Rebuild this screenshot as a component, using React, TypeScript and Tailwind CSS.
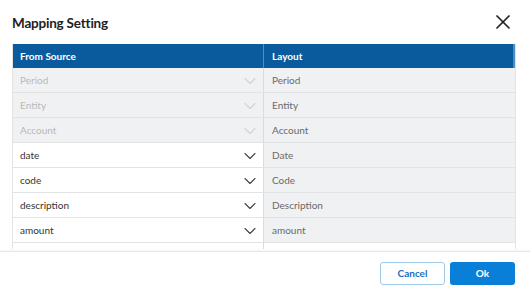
import { ChevronDown, X } from "lucide-react";

const ROWS = [
  { source: "Period", target: "Period", locked: true },
  { source: "Entity", target: "Entity", locked: true },
  { source: "Account", target: "Account", locked: true },
  { source: "date", target: "Date", locked: false },
  { source: "code", target: "Code", locked: false },
  { source: "description", target: "Description", locked: false },
  { source: "amount", target: "amount", locked: false },
];

export default function App() {
  return (
    <div className="h-[300px] w-[530px] bg-white font-['Lato','Liberation_Sans',sans-serif] text-[10px]">
      <div className="flex h-[44px] items-center justify-between pl-3 pr-[15px]">
        <h1 className="pt-[2px] text-[13.5px] font-bold tracking-[-0.2px] text-[#222]">Mapping Setting</h1>
        <X className="h-6 w-6 text-[#222]" strokeWidth={1.7} />
      </div>

      <div className="mx-3 w-[504px] border-x border-[#e3e3e3]">
        <div className="flex h-[24px] bg-[#0a5a9e] font-bold text-white">
          <div className="flex w-[251px] items-center border-r border-[#4d8cc4] pl-[7px]">From Source</div>
          <div className="flex flex-1 items-center border-r-2 border-[#4d8cc4] pl-2">Layout</div>
        </div>
        {ROWS.map((r) => (
          <div key={r.source} className="flex h-[25px] border-b border-[#e2e3e5]">
            <div
              className={
                r.locked
                  ? "flex w-[251px] items-center justify-between border-r border-[#dcdcdc] bg-[#f0f1f3] pl-[7px] pr-[3px] pt-px text-[#b9b9b9]"
                  : "flex w-[251px] items-center justify-between border-r border-[#dcdcdc] bg-white pl-[7px] pr-[3px] pt-px text-[#333]"
              }
            >
              <span>{r.source}</span>
              <ChevronDown
                className={r.locked ? "h-5 w-5 text-[#d3d3d3]" : "h-5 w-5 text-[#444]"}
                strokeWidth={1.3}
              />
            </div>
            <div className="flex flex-1 items-center bg-[#f0f1f3] pl-2 pt-px text-[#6a6a6a]">{r.target}</div>
          </div>
        ))}
        <div className="flex h-[6px]">
          <div className="w-[251px] border-r border-[#dcdcdc]" />
        </div>
      </div>

      <div className="mt-[2px] flex justify-end gap-[5px] border-t border-[#e6e6e6] pr-[15px] pt-[10px] shadow-[0_-1px_2px_rgba(0,0,0,0.04)]">
        <button className="h-[23px] w-[65px] rounded-[3px] border border-[#9dcaea] bg-white font-bold text-[#1a6fbf]">
          Cancel
        </button>
        <button className="h-[23px] w-[65px] rounded-[3px] bg-[#0a7fd8] font-bold text-white">Ok</button>
      </div>
    </div>
  );
}
